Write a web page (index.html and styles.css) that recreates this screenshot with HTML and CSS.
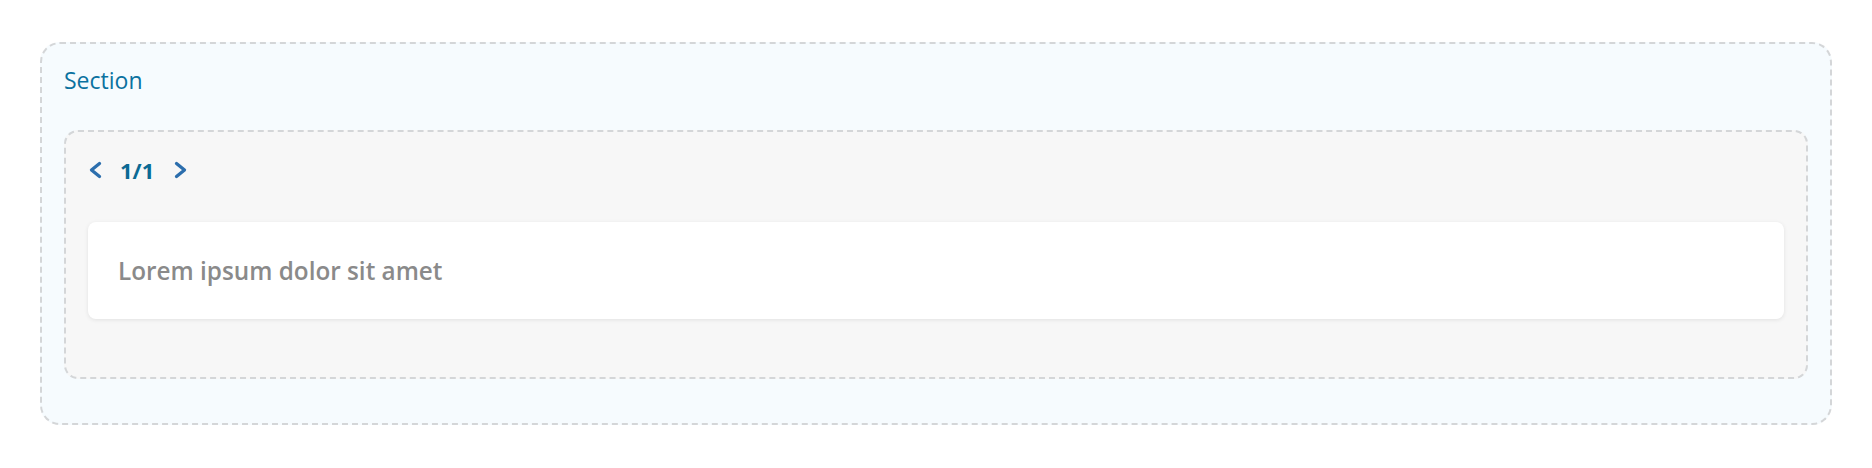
FILE: index.html
```html
<!DOCTYPE html>
<html lang="en">
<head>
<meta charset="utf-8">
<title>Section</title>
<link rel="stylesheet" href="styles.css">
</head>
<body>
  <section class="section">
    <h2 class="section-title">Section</h2>
    <div class="carousel">
      <div class="pager">
        <button class="pager-btn" aria-label="Previous">
          <svg width="14" height="18" viewBox="0 0 14 18"><polyline points="11.5,2.5 3.5,9 11.5,15.5" fill="none" stroke="#2c6ead" stroke-width="3.3" stroke-linecap="round" stroke-linejoin="round"/></svg>
        </button>
        <span class="pager-count">1/1</span>
        <button class="pager-btn" aria-label="Next">
          <svg width="14" height="18" viewBox="0 0 14 18"><polyline points="2.5,2.5 10.5,9 2.5,15.5" fill="none" stroke="#2c6ead" stroke-width="3.3" stroke-linecap="round" stroke-linejoin="round"/></svg>
        </button>
      </div>
      <div class="card">
        <p class="card-text">Lorem ipsum dolor sit amet</p>
      </div>
    </div>
  </section>
</body>
</html>
```

FILE: styles.css
```css
html, body {
  margin: 0;
  padding: 0;
  background: #ffffff;
}
body {
  padding: 42px 40px;
  font-family: "Segoe UI", "Open Sans", "Noto Sans", sans-serif;
}
.section {
  background: #f6fbfe;
  border: 2px dashed #d4d6d8;
  border-radius: 20px;
  padding: 20px 22px 44px;
}
.section-title {
  margin: 0;
  font-size: 23px;
  font-weight: 400;
  line-height: 32px;
  color: #0b72a0;
}
.carousel {
  margin-top: 34px;
  background: #f7f7f7;
  border: 2px dashed #d4d6d8;
  border-radius: 14px;
  padding: 22px 22px 58px;
}
.pager {
  display: flex;
  align-items: center;
  height: 32px;
}
.pager-btn {
  display: flex;
  align-items: center;
  justify-content: center;
  width: 14px;
  height: 18px;
  padding: 0;
  border: 0;
  background: none;
}
.pager-count {
  font-size: 22px;
  font-weight: 700;
  color: #0b6a94;
  margin: 0 20px 0 18px;
}
.card {
  margin-top: 36px;
  background: #ffffff;
  border-radius: 8px;
  box-shadow: 0 1px 4px rgba(0, 0, 0, 0.09);
  padding: 32px 30px;
}
.card-text {
  margin: 0;
  font-size: 24.3px;
  font-weight: 600;
  line-height: 33px;
  color: #8a8a8a;
}
```
